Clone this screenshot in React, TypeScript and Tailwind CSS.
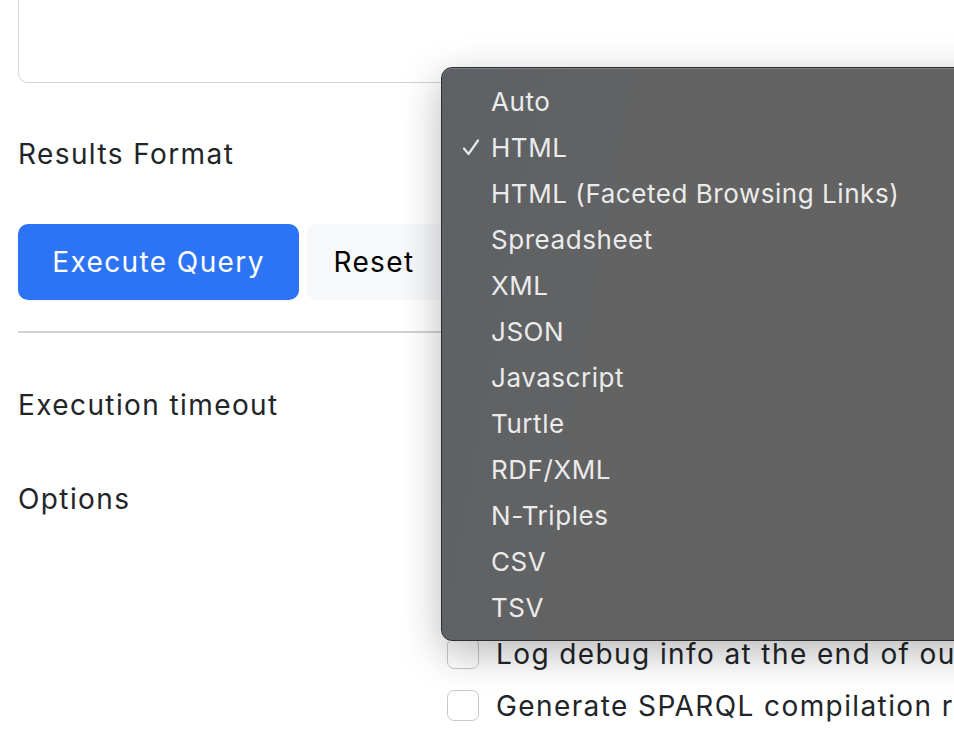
import React from "react";

const formats = [
  "Auto",
  "HTML",
  "HTML (Faceted Browsing Links)",
  "Spreadsheet",
  "XML",
  "JSON",
  "Javascript",
  "Turtle",
  "RDF/XML",
  "N-Triples",
  "CSV",
  "TSV",
];

function Check() {
  return (
    <svg width="18" height="17" viewBox="0 0 18 17" className="shrink-0">
      <path d="M2 9.5 L6.5 15 L16 1.5" fill="none" stroke="#e8e8e8" strokeWidth="2.2" strokeLinecap="round" strokeLinejoin="round" />
    </svg>
  );
}

export default function App() {
  const selected = "HTML";

  return (
    <div
      className="relative h-[730px] w-[954px] overflow-hidden bg-white text-[#212529]"
      style={{ fontFamily: "Inter, 'Noto Sans', sans-serif" }}
    >
      <div className="w-[1200px] pl-[18px] tracking-[1.4px]">
        {/* query textarea (top cut off) */}
        <div className="-mt-[20px] h-[103px] rounded-[10px] border-[1.5px] border-[#ced4da] bg-white" />

        <div className="flex h-[141px] items-center text-[28px]">Results Format</div>

        <div className="flex gap-2">
          <button className="h-[76px] w-[281px] rounded-[10px] bg-[#2d74f5] text-[28px] tracking-[1.4px] text-white">Execute Query</button>
          <button className="h-[76px] w-[140px] rounded-[10px] bg-[#f7f8fa] pr-[6px] text-[28px] tracking-[1.4px] text-black">Reset</button>
        </div>

        <div className="mt-[31px] h-[2px] bg-[#d2d2d2]" />

        <div className="mt-[52px] text-[28px] leading-[40px]">Execution timeout</div>
        <div className="mt-[54px] text-[28px] leading-[40px]">Options</div>

        <div className="ml-[429px] mt-[119px] flex flex-col gap-[21px]">
          {["Log debug info at the end of output", "Generate SPARQL compilation report"].map((t) => (
            <div key={t} className="flex h-[31px] items-center gap-[17px]">
              <span className="h-[31px] w-[32px] shrink-0 rounded-[7px] border-[1.5px] border-[#c9c9c9] bg-white" />
              <span className="whitespace-nowrap text-[28px]">{t}</span>
            </div>
          ))}
        </div>
      </div>

      {/* open select menu */}
      <div className="absolute left-[441px] top-[67px] h-[574px] w-[620px] rounded-[11px] border border-[#2f2f2f] bg-[linear-gradient(100deg,#5d6165_0%,#636363_35%,#626262_100%)] py-[10px] shadow-[0_12px_40px_rgba(0,0,0,0.28),inset_0_1px_0_rgba(255,255,255,0.18)]">
        {formats.map((f) => (
          <div key={f} className="flex h-[46px] items-center text-[26px] tracking-[0.55px] text-[#ebebeb]">
            <span className="flex w-[49px] justify-end pr-[11px]">{f === selected ? <Check /> : null}</span>
            <span className="whitespace-nowrap">{f}</span>
          </div>
        ))}
      </div>
    </div>
  );
}
